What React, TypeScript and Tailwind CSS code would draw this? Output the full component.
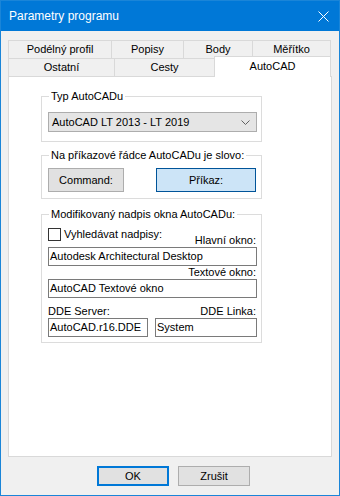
const tabRow1 = [
  { label: "Podélný profil", w: "w-[104px]" },
  { label: "Popisy", w: "w-[73px]" },
  { label: "Body", w: "w-[70px]" },
  { label: "Měřítko", w: "w-[79px]" },
]

const tabRow2 = [
  { label: "Ostatní", w: "w-[107px]" },
  { label: "Cesty", w: "w-[101px]" },
]

const TextBox = ({ value, className = "" }: { value: string; className?: string }) => (
  <div className={`h-[19px] bg-white border border-[#7a7a7a] pl-[1px] flex items-center whitespace-nowrap ${className}`}>
    {value}
  </div>
)

export default function App() {
  return (
    <div className="w-[340px] h-[496px] flex flex-col border border-[#1a85d8] bg-[#f0f0f0] font-['Liberation_Sans',Arial,sans-serif] text-[11px] leading-[13px] text-black">
      {/* Title bar */}
      <div className="h-[30px] shrink-0 bg-[#0078d7] flex items-center justify-between pl-[8px] pr-[10px] text-white text-[12px]">
        <span>Parametry programu</span>
        <svg width="11" height="11" viewBox="0 0 11 11">
          <path d="M0.5 0.5 L10.5 10.5 M10.5 0.5 L0.5 10.5" stroke="#fff" strokeWidth="1" />
        </svg>
      </div>

      <div className="flex-1 flex flex-col px-[7px] pt-[9px]">
        {/* Tabs */}
        <div className="flex h-[18px]">
          {tabRow1.map((t, i) => (
            <div
              key={t.label}
              className={`${t.w} ${i > 0 ? "-ml-px" : ""} border border-b-0 border-[#d9d9d9] flex items-center justify-center`}
            >
              {t.label}
            </div>
          ))}
        </div>
        <div className="flex h-[18px]">
          {tabRow2.map((t, i) => (
            <div
              key={t.label}
              className={`${t.w} ${i > 0 ? "-ml-px" : ""} border border-b-0 border-[#d9d9d9] flex items-center justify-center`}
            >
              {t.label}
            </div>
          ))}
          <div className="relative z-10 w-[117px] -ml-px -mt-[2px] h-[21px] bg-white border border-b-0 border-[#d9d9d9] flex justify-center pt-[3px]">
            AutoCAD
          </div>
        </div>

        {/* Panel */}
        <div className="flex-1 bg-white border border-[#d9d9d9] pl-[32px] pt-[13px]">
          <fieldset className="w-[221px] border border-[#dcdcdc] pl-[6px] pr-[4px] pb-[9px]">
            <legend className="ml-[1px] px-[2px]">Typ AutoCADu</legend>
            <div className="mt-[9px] h-[20px] bg-[#e5e5e5] border border-[#adadad] flex items-center justify-between pl-[3px] pr-[6px]">
              <span>AutoCAD LT 2013 - LT 2019</span>
              <svg width="9" height="5" viewBox="0 0 9 5">
                <polyline points="0.5,0.5 4.5,4.5 8.5,0.5" fill="none" stroke="#606060" strokeWidth="1" />
              </svg>
            </div>
          </fieldset>

          <fieldset className="mt-[7px] w-[221px] border border-[#dcdcdc] pl-[6px] pr-[4px] pb-[6px]">
            <legend className="ml-[1px] px-[2px]">Na příkazové řádce AutoCADu je slovo:</legend>
            <div className="mt-[6px] flex justify-between">
              <div className="w-[76px] h-[24px] bg-[#e1e1e1] border border-[#adadad] flex items-center justify-center">
                Command:
              </div>
              <div className="w-[100px] h-[24px] mr-[1px] bg-[#cce4f7] border border-[#005499] flex items-center justify-center">
                Příkaz:
              </div>
            </div>
          </fieldset>

          <fieldset className="mt-[9px] w-[221px] border border-[#dcdcdc] pl-[6px] pr-[4px] pb-[5px]">
            <legend className="ml-[1px] px-[2px]">Modifikovaný nadpis okna AutoCADu:</legend>
            <div className="h-[26px] flex justify-between">
              <div className="mt-[7px] h-[13px] flex items-center gap-[3px]">
                <div className="w-[13px] h-[13px] bg-white border border-[#333333]" />
                <span>Vyhledávat nadpisy:</span>
              </div>
              <span className="self-end mr-[1px]">Hlavní okno:</span>
            </div>
            <TextBox value="Autodesk Architectural Desktop" />
            <div className="h-[13px] flex justify-end mr-[1px]">Textové okno:</div>
            <TextBox value="AutoCAD Textové okno" />
            <div className="mt-[7px] h-[13px] flex justify-between mr-[1px]">
              <span>DDE Server:</span>
              <span>DDE Linka:</span>
            </div>
            <div className="flex gap-[7px]">
              <TextBox value="AutoCAD.r16.DDE" className="w-[100px]" />
              <TextBox value="System" className="flex-1" />
            </div>
          </fieldset>
        </div>

        {/* Footer buttons */}
        <div className="h-[38px] shrink-0 flex items-center pl-[89px] gap-[9px]">
          <div className="w-[72px] h-[20px] bg-[#e1e1e1] border-2 border-[#0078d7] flex items-center justify-center">
            OK
          </div>
          <div className="w-[72px] h-[20px] bg-[#e1e1e1] border border-[#adadad] flex items-center justify-center">
            Zrušit
          </div>
        </div>
      </div>
    </div>
  )
}
